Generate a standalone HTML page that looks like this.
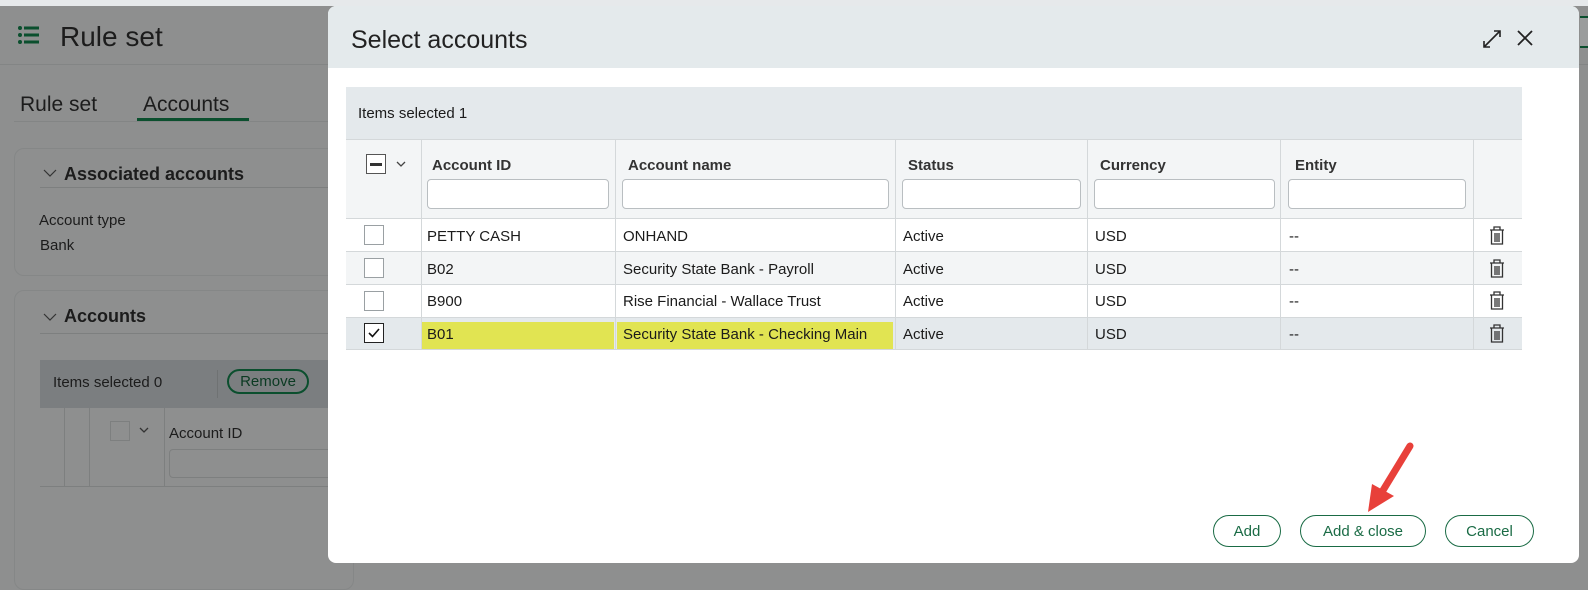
<!DOCTYPE html>
<html style="background:#8e8f8f"><head><style>
*{box-sizing:border-box;margin:0;padding:0}
body{width:1588px;height:575px;overflow:hidden;background:#8e8f8f;font-family:"Liberation Sans",Arial,sans-serif;position:relative;color:#1b1b1b}
.a{position:absolute}
.t{font-size:15px}
.cb{position:absolute;width:20px;height:20px;border:1px solid #9aa0a3;background:#fff}
.inp{position:absolute;top:179px;height:30px;border:1px solid #b9bec1;border-radius:4px;background:#fff}
.btn{position:absolute;top:515px;height:32px;border:1.5px solid #1a6b45;border-radius:16px;color:#1a6b45;font-size:15px;text-align:center;line-height:31px;background:#fff}
.vl{position:absolute;width:1px;background:#d4d8da}
.hl{position:absolute;height:1px;background:#d4d8da;left:346px;width:1176px}
.dk{color:#1c1c1c}
</style></head><body>
<div class="a" style="left:0;top:0;width:1588px;height:6px;background:#e6e9eb"></div>
<div class="a" style="left:0;top:64px;width:1588px;height:1px;background:#838585"></div>
<svg class="a" style="left:17px;top:25px" width="24" height="20"><g fill="#0b4f2e"><circle cx="3" cy="3" r="2"/><circle cx="3" cy="10" r="2"/><circle cx="3" cy="17" r="2"/><rect x="7" y="1.5" width="15" height="3"/><rect x="7" y="8.5" width="15" height="3"/><rect x="7" y="15.5" width="15" height="3"/></g></svg>
<div class="a dk" style="left:60px;top:21px;font-size:28px">Rule set</div>
<div class="a dk" style="left:20px;top:93px;font-size:21px">Rule set</div>
<div class="a dk" style="left:143px;top:93px;font-size:21px">Accounts</div>
<div class="a" style="left:137px;top:118px;width:112px;height:3px;background:#0b4f2e"></div>
<div class="a" style="left:14px;top:121px;width:320px;height:1px;background:#838585"></div>
<div class="a" style="left:14px;top:148px;width:340px;height:128px;border:1px solid #858787;border-radius:10px"></div>
<svg class="a" style="left:43px;top:168px" width="14" height="10" fill="none" stroke="#333" stroke-width="1.2"><path d="M1 2l6 6 6-6"/></svg>
<div class="a dk" style="left:64px;top:164px;font-size:18px;font-weight:bold">Associated accounts</div>
<div class="a" style="left:40px;top:187px;width:300px;height:1px;background:#7d7f7f"></div>
<div class="a dk" style="left:39px;top:212px;font-size:15px">Account type</div>
<div class="a dk" style="left:40px;top:237px;font-size:15px">Bank</div>
<div class="a" style="left:14px;top:290px;width:340px;height:300px;border:1px solid #858787;border-radius:10px"></div>
<svg class="a" style="left:43px;top:312px" width="14" height="10" fill="none" stroke="#333" stroke-width="1.2"><path d="M1 2l6 6 6-6"/></svg>
<div class="a dk" style="left:64px;top:306px;font-size:18px;font-weight:bold">Accounts</div>
<div class="a" style="left:40px;top:333px;width:300px;height:1px;background:#7d7f7f"></div>
<div class="a" style="left:40px;top:360px;width:300px;height:48px;background:#7b7e80"></div>
<div class="a" style="left:217px;top:370px;width:1px;height:28px;background:#6f7273"></div>
<div class="a dk" style="left:53px;top:374px;font-size:15px">Items selected 0</div>
<div class="a" style="left:227px;top:369px;width:82px;height:25px;border:2px solid #0b4f2e;border-radius:13px;text-align:center;font-size:15px;line-height:21px;color:#0b3a22">Remove</div>
<div class="a" style="left:40px;top:408px;width:300px;height:79px;border-bottom:1px solid #7d7f7f"></div>
<div class="a" style="left:64px;top:408px;width:1px;height:79px;background:#7d7f7f"></div>
<div class="a" style="left:89px;top:408px;width:1px;height:79px;background:#7d7f7f"></div>
<div class="a" style="left:164px;top:408px;width:1px;height:79px;background:#7d7f7f"></div>
<div class="a" style="left:110px;top:421px;width:20px;height:20px;border:1px solid #7d7f7f"></div>
<svg class="a" style="left:139px;top:427px" width="10" height="7" fill="none" stroke="#333" stroke-width="1.3"><path d="M1 1l4 4 4-4"/></svg>
<div class="a dk" style="left:169px;top:425px;font-size:15px">Account ID</div>
<div class="a" style="left:169px;top:449px;width:170px;height:29px;border:1px solid #7d7f7f;border-radius:4px"></div>

<div class="a" style="left:328px;top:6px;width:1251px;height:557px;background:#fff;border-radius:8px;overflow:hidden">
<div class="a" style="left:0;top:0;width:1251px;height:62px;background:#e4eaec"></div>
<div class="a" style="left:23px;top:20px;font-size:25px;color:#222">Select accounts</div>
</div>
<svg class="a" style="left:1480px;top:27px" width="24" height="24" fill="none" stroke="#222" stroke-width="1.6"><path d="M4 20L20 4M14 4h6v6M4 14v6h6"/></svg>
<svg class="a" style="left:1516px;top:29px" width="18" height="18" stroke="#222" stroke-width="1.8"><path d="M2 2L16 16M16 2L2 16"/></svg>

<div class="a" style="left:346px;top:87px;width:1176px;height:52px;background:#e4e9ec"></div>
<div class="a" style="left:358px;top:105px;font-size:15px">Items selected 1</div>
<div class="a" style="left:346px;top:139px;width:1176px;height:79px;background:#f3f5f6"></div>
<div class="a" style="left:346px;top:251px;width:1176px;height:33px;background:#f3f5f6"></div>
<div class="a" style="left:346px;top:317px;width:1176px;height:33px;background:#e4e9ec"></div>
<div class="a" style="left:422px;top:322px;width:192px;height:27px;background:#e1e452"></div>
<div class="a" style="left:617px;top:322px;width:276px;height:27px;background:#e1e452"></div>
<div class="hl" style="top:139px"></div><div class="hl" style="top:218px"></div><div class="hl" style="top:251px"></div><div class="hl" style="top:284px"></div><div class="hl" style="top:317px"></div><div class="hl" style="top:349px"></div>
<div class="vl" style="left:421px;top:139px;height:211px"></div>
<div class="vl" style="left:615px;top:139px;height:211px"></div>
<div class="vl" style="left:895px;top:139px;height:211px"></div>
<div class="vl" style="left:1087px;top:139px;height:211px"></div>
<div class="vl" style="left:1280px;top:139px;height:211px"></div>
<div class="vl" style="left:1473px;top:139px;height:211px"></div>
<div class="cb" style="left:366px;top:154px;border-color:#555"><div style="margin:8px 3px;height:3px;background:#333"></div></div>
<svg class="a" style="left:396px;top:161px" width="10" height="7" fill="none" stroke="#444" stroke-width="1.3"><path d="M1 1l4 4 4-4"/></svg>
<div class="a t" style="left:432px;top:157px;font-weight:bold;color:#333">Account ID</div>
<div class="a t" style="left:628px;top:157px;font-weight:bold;color:#333">Account name</div>
<div class="a t" style="left:908px;top:157px;font-weight:bold;color:#333">Status</div>
<div class="a t" style="left:1100px;top:157px;font-weight:bold;color:#333">Currency</div>
<div class="a t" style="left:1295px;top:157px;font-weight:bold;color:#333">Entity</div>
<div class="inp" style="left:427px;width:182px"></div>
<div class="inp" style="left:622px;width:267px"></div>
<div class="inp" style="left:902px;width:179px"></div>
<div class="inp" style="left:1094px;width:181px"></div>
<div class="inp" style="left:1288px;width:178px"></div>

<div class="cb" style="left:364px;top:225px"></div>
<div class="cb" style="left:364px;top:258px"></div>
<div class="cb" style="left:364px;top:291px"></div>
<div class="cb" style="left:364px;top:323px;border-color:#222"><svg width="18" height="18" fill="none" stroke="#111" stroke-width="1.6"><path d="M4 9l3.5 3.5L14 5"/></svg></div>
<div class="a t" style="left:427px;top:228px">PETTY CASH</div><div class="a t" style="left:623px;top:228px">ONHAND</div><div class="a t" style="left:903px;top:228px">Active</div><div class="a t" style="left:1095px;top:228px">USD</div><div class="a t" style="left:1289px;top:228px">--</div>
<div class="a t" style="left:427px;top:261px">B02</div><div class="a t" style="left:623px;top:261px">Security State Bank - Payroll</div><div class="a t" style="left:903px;top:261px">Active</div><div class="a t" style="left:1095px;top:261px">USD</div><div class="a t" style="left:1289px;top:261px">--</div>
<div class="a t" style="left:427px;top:293px">B900</div><div class="a t" style="left:623px;top:293px">Rise Financial - Wallace Trust</div><div class="a t" style="left:903px;top:293px">Active</div><div class="a t" style="left:1095px;top:293px">USD</div><div class="a t" style="left:1289px;top:293px">--</div>
<div class="a t" style="left:427px;top:326px">B01</div><div class="a t" style="left:623px;top:326px">Security State Bank - Checking Main</div><div class="a t" style="left:903px;top:326px">Active</div><div class="a t" style="left:1095px;top:326px">USD</div><div class="a t" style="left:1289px;top:326px">--</div>
<svg class="a" style="left:1488px;top:225px" width="18" height="120" fill="none" stroke="#333" stroke-width="1.3">
<g id="tr"><path d="M2 5h14M6 5V2h6v3M3.5 5v14h11V5M7 8v9M9 8v9M11 8v9"/></g>
<use href="#tr" y="33"/><use href="#tr" y="65"/><use href="#tr" y="98"/></svg>

<div class="btn" style="left:1213px;width:68px">Add</div>
<div class="btn" style="left:1300px;width:126px">Add &amp; close</div>
<div class="btn" style="left:1445px;width:89px">Cancel</div>
<svg class="a" style="left:1360px;top:440px" width="60" height="80"><path d="M50 6L22 52" stroke="#e8403a" stroke-width="7" stroke-linecap="round"/><path d="M8 72L12 44L34 56Z" fill="#e8403a"/></svg>
<div class="a" style="left:1580px;top:16px;width:8px;height:32px;border-top:2px solid #0b4f2e;border-bottom:2px solid #0b4f2e;background:#9a9c9c"></div>
</body></html>
